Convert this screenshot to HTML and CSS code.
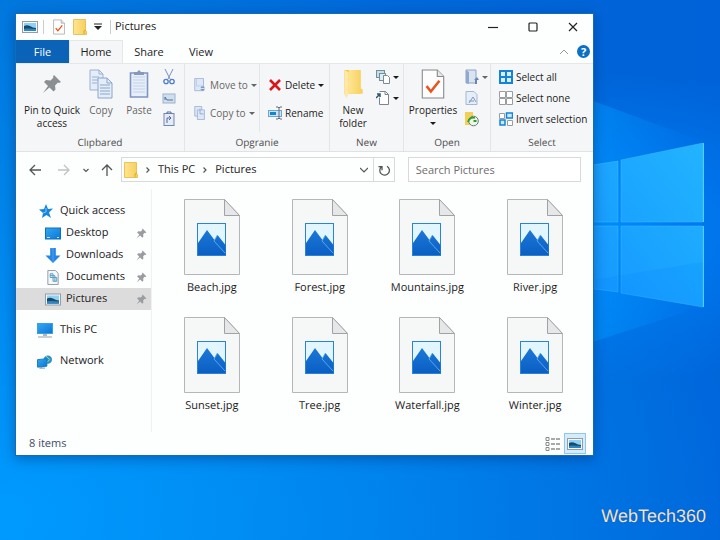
FILE: index.html
```
<!DOCTYPE html>
<html lang="en">
<head>
<meta charset="utf-8">
<title>Pictures</title>
<link rel="stylesheet" href="styles.css">
</head>
<body>
<svg class="defs" aria-hidden="true">
  <defs>
    <linearGradient id="gFolder" x1="0" x2="1"><stop offset="0" stop-color="#ffe591"/><stop offset="1" stop-color="#f6cf5b"/></linearGradient>
    <linearGradient id="gBlue" x1="0" y1="0" x2="1" y2="1"><stop offset="0" stop-color="#35a8f4"/><stop offset="1" stop-color="#0876d6"/></linearGradient>
    <linearGradient id="gPane" x1="0" y1="1" x2="1" y2="0"><stop offset="0" stop-color="#1495ff"/><stop offset="1" stop-color="#22b4ff"/></linearGradient>
    <linearGradient id="gBeam" x1="0" x2="1"><stop offset="0" stop-color="#0098ff" stop-opacity=".6"/><stop offset="1" stop-color="#0090ff" stop-opacity="0"/></linearGradient>
    <linearGradient id="gMount" x1="0" y1="0" x2="0" y2="1"><stop offset="0" stop-color="#1b78d8"/><stop offset="1" stop-color="#0b5fc2"/></linearGradient>
  </defs>
  <symbol id="picture" viewBox="0 0 16 14">
    <rect x=".5" y="1.5" width="15" height="11" fill="#f4f7fa" stroke="#929da8"/>
    <rect x="2" y="3" width="12" height="8" fill="#8fd0f5"/>
    <path d="M2 6c2-1 4-1 6 0s4 2 6 2v3H2z" fill="#17496e"/><path d="M2 9c4-1 8 0 12 0v2H2z" fill="#2f86c0"/>
  </symbol>
  <symbol id="checkdoc" viewBox="0 0 22 28">
    <path d="M1 1h14l6 6v20H1z" fill="#fdfdfd" stroke="#85888c"/><path d="M15 1v6h6" fill="#e6e6e6" stroke="#85888c"/>
    <path d="M5 16l4 5 8-10" fill="none" stroke="#e8541d" stroke-width="2.4"/>
  </symbol>
  <symbol id="folder" viewBox="0 0 18 28">
    <path d="M1 1h15v22H4l-1 4-2-4z" fill="#f3c64f"/><path d="M1 1l4 2v20l-2 4-2-4z" fill="#ffe9a4"/><path d="M5 1h11v17l2 1v4H5z" fill="url(#gFolder)"/>
  </symbol>
  <symbol id="smallfolder" viewBox="0 0 14 16">
    <path d="M.5.5h12v11l1 1v3H.5z" fill="url(#gFolder)" stroke="#e9c258"/><path d="M11 15v-3l2-1" fill="none" stroke="#dba92c"/>
  </symbol>
  <symbol id="pin" viewBox="0 0 20 20">
    <path d="M12 1l7 7-2 1-1-.5-3 3 .5 4-2 2-4-4L1 19l5-7-4-4 2-2 4.500.5 3-3L11 2.500z" fill="currentColor"/>
  </symbol>
  <symbol id="page" viewBox="0 0 14 16">
    <path d="M1 .5h10v14H1z" fill="#dce8f6" stroke="#9fb4d6"/><path d="M3 1v8h8" fill="none" stroke="#bccde6"/>
    <circle cx="10" cy="12" r="2.500" fill="#7f98c4"/><path d="M7 12h6" stroke="#dce8f6"/>
  </symbol>
  <symbol id="pagecopy" viewBox="0 0 14 16">
    <path d="M1 .5h8v11H1z" fill="#dce8f6" stroke="#9fb4d6"/><path d="M4 4.500h8v11H4z" fill="#dce8f6" stroke="#9fb4d6"/><path d="M7 3v6h4" fill="none" stroke="#8da6cc"/>
  </symbol>
  <symbol id="jpg" viewBox="0 0 56 76">
    <path d="M.5.5h40l15 16v59H.5z" fill="#f6f7f7" stroke="#b4b6b7"/><path d="M40.500.5v16h15z" fill="#e5e7e8" stroke="#a0a2a4"/>
    <rect x="13.500" y="24.500" width="28" height="32" fill="#e2f6ff" stroke="#2883dc"/>
    <path d="M14 44l9-13 7.500 10 3-5 8 10V56H14z" fill="url(#gMount)"/><path d="M33.500 36l-3.500 6 11 12" fill="none" stroke="#58a6ec"/>
  </symbol>
</svg>

<svg class="wallpaper" viewBox="0 0 720 540" preserveAspectRatio="none" aria-hidden="true">
  <path d="M580 96L704 142V306L580 346z" fill="url(#gBeam)"/>
  <g fill="url(#gPane)" stroke="#42bfff" stroke-opacity=".45">
    <path d="M580 167L618 161V222H580zM621 160L703 143V222H621zM580 226H618V292L580 287zM621 226H703V307L621 293z"/>
  </g>
  <path d="M703.500 143V222M703.500 226V307" stroke="#4fd0ff"/>
  <path d="M580 282L703 262V307L580 287z" fill="#0080ff" opacity=".15"/>
</svg>

<main class="window">
  <header class="titlebar">
    <svg class="i16"><use href="#picture"/></svg><i class="bar"></i>
    <svg class="qdoc"><use href="#checkdoc"/></svg>
    <svg class="qfolder"><use href="#smallfolder"/></svg>
    <svg class="qmore" viewBox="0 0 8 8"><path d="M0 1h8" stroke="#222"/><path d="M0 3h8L4 7z" fill="#222"/></svg><i class="bar last"></i>
    <h1>Pictures</h1>
    <div class="caption">
      <button aria-label="Minimize"><svg viewBox="0 0 10 10"><path d="M0 5.500h10"/></svg></button>
      <button aria-label="Maximize"><svg viewBox="0 0 10 10"><rect x="1" y="1" width="8" height="8" rx="1"/></svg></button>
      <button aria-label="Close"><svg viewBox="0 0 10 10"><path d="M1 1l8 8M9 1L1 9"/></svg></button>
    </div>
  </header>

  <nav class="tabs">
    <button class="file">File</button><button class="active">Home</button><button>Share</button><button>View</button>
    <span class="tabtools">
      <button aria-label="Collapse ribbon"><svg class="up" viewBox="0 0 8 6"><path d="M0 5l4-4 4 4" fill="none" stroke="#999"/></svg></button>
      <button class="help" aria-label="Help">?</button>
    </span>
  </nav>

  <section class="ribbon">
    <div class="group">
      <div class="tools clip">
        <button class="big pinbtn"><svg class="pinbig"><use href="#pin"/></svg><span>Pin to Quick access</span></button>
        <button class="big dim"><svg viewBox="0 0 24 30"><path d="M1 1h9l4 4v16H1z" fill="#e4edf8" stroke="#9bb1d4"/><path d="M10 1v4h4M3 8h7M3 11h7M3 14h5" fill="none" stroke="#9bb1d4"/><path d="M9 9h9l5 5v15H9z" fill="#e4edf8" stroke="#8ba5ce"/><path d="M18 9v5h5M11 16h10M11 19h10M11 22h10M11 25h10" fill="none" stroke="#8ba5ce"/></svg><span>Copy</span></button>
        <button class="big dim"><svg viewBox="0 0 20 30"><path d="M1.500 4h17v24h-17z" fill="#e6eef9" stroke="#7f94c0" stroke-width="1.600"/><path d="M4 8h12M4 11h12M4 14h12M4 17h12M4 20h12M4 23h12" stroke="#c3d1e7"/><path d="M5 6V3h3l2-2 2 2h3v3z" fill="#8798b8"/></svg><span>Paste</span></button>
        <div class="minis">
          <button aria-label="Cut"><svg viewBox="0 0 12 16"><path d="M2 0l5 10M10 0L5 10" stroke="#7e93b8" fill="none"/><circle cx="3" cy="12.500" r="2.200" fill="none" stroke="#4f7fc9" stroke-width="1.300"/><circle cx="9" cy="12.500" r="2.200" fill="none" stroke="#4f7fc9" stroke-width="1.300"/></svg></button>
          <button aria-label="Copy path"><svg viewBox="0 0 12 16"><rect x="0" y="4" width="12" height="9" fill="#d0dfef" stroke="#9db2cf"/><path d="M2 10V7l2 3h6" fill="none" stroke="#5a7195"/></svg></button>
          <button aria-label="Paste shortcut"><svg viewBox="0 0 12 16"><rect x="1" y="2.500" width="10" height="12" fill="#e4ecf7" stroke="#7487b1"/><path d="M4 2.500V1h4v1.500M4 12V7h4l-2-2m2 2L6 9" fill="none" stroke="#516a9e"/></svg></button>
        </div>
      </div>
      <h2>Clıpbared</h2>
    </div>
    <div class="group">
      <div class="tools organize">
        <div class="list dim">
          <button><svg><use href="#page"/></svg>Move to<i class="caret"></i></button>
          <button><svg><use href="#pagecopy"/></svg>Copy to<i class="caret"></i></button>
        </div>
        <div class="list second">
          <button><svg viewBox="0 0 14 14"><path d="M2 2l10 10M12 2L2 12" stroke="#d9161b" stroke-width="2.600"/></svg>Delete<i class="caret"></i></button>
          <button><svg viewBox="0 0 14 14"><rect x=".5" y="4.500" width="13" height="6" fill="#c9e6f8" stroke="#6ea5cf"/><rect x="2" y="6" width="6" height="3" fill="#1684cc"/><path d="M8 1h2l1 1 1-1h2M8 13h2l1-1 1 1h2M11 2v10" fill="none" stroke="#5f6b7c"/></svg>Rename</button>
        </div>
      </div>
      <h2>Opgranie</h2>
    </div>
    <div class="group">
      <div class="tools new">
        <button class="big folderbtn"><svg><use href="#folder"/></svg><span>New folder</span></button>
        <div class="minis">
          <button aria-label="New item"><svg viewBox="0 0 14 16"><rect x=".5" y="1.500" width="8" height="7" fill="#bde1ee" stroke="#7c8b96"/><rect x="3.500" y="4.500" width="6" height="7" fill="#dceef5" stroke="#7c8b96"/><path d="M7.500 6.500h4l2 2v6h-6z" fill="#fff" stroke="#7c8b96"/></svg><i class="caret"></i></button>
          <button aria-label="Easy access"><svg viewBox="0 0 14 16"><path d="M3.500 1.500h6l3 3v10h-9v-7" fill="#fff" stroke="#7c858e"/><path d="M9 1.500v3h3.500" fill="none" stroke="#7c858e"/><path d="M0 8l4-4M1 4h3v3" fill="none" stroke="#2b5972" stroke-width="1.500"/></svg><i class="caret"></i></button>
        </div>
      </div>
      <h2>New</h2>
    </div>
    <div class="group">
      <div class="tools open">
        <button class="big"><svg><use href="#checkdoc"/></svg><span>Properties</span><i class="caret"></i></button>
        <div class="minis">
          <button aria-label="Open" class="dim"><svg viewBox="0 0 14 16"><path d="M1 1h10v13H1z" fill="#dae4f1" stroke="#8da3c4"/><path d="M1 1l3 2v12l-3-1z" fill="#91a9ce"/><path d="M9 11l3-3 2 3h-2v4h-2v-4z" fill="#6985b3"/></svg><i class="caret"></i></button>
          <button aria-label="Edit"><svg viewBox="0 0 14 16"><path d="M1 1.500h8l3 3v10H1z" fill="#e5edf8" stroke="#a4b7d6"/><path d="M4 13l4-6 3 5M4 11h5" fill="none" stroke="#7f99c5"/></svg></button>
          <button aria-label="History"><svg viewBox="0 0 14 16"><path d="M0 1h8v13H0z" fill="#f4cf57"/><circle cx="8.500" cy="10" r="4.800" fill="#eef5e9" stroke="#6c7b6f"/><path d="M3 11c1-4 4-5 7-4M8.500 10h3" fill="none" stroke="#2d9e2f" stroke-width="1.800"/></svg></button>
        </div>
      </div>
      <h2>Open</h2>
    </div>
    <div class="group">
      <div class="tools list select">
        <button><svg viewBox="0 0 14 14"><rect width="14" height="14" fill="#1683d8"/><path d="M2 2h4v4H2zM8 2h4v4H8zM2 8h4v4H2zM8 8h4v4H8z" fill="#d3f1ff"/></svg>Select all</button>
        <button><svg viewBox="0 0 14 14"><path d="M.5.5h6v6h-6zM7.500.5h6v6h-6zM.5 7.500h6v6h-6zM7.500 7.500h6v6h-6z" fill="#fff" stroke="#999da1"/></svg>Select none</button>
        <button><svg viewBox="0 0 14 14"><path d="M.5 1.500h5v5h-5zM8.500 8.500h5v5h-5z" fill="#fff" stroke="#999da1"/><path d="M7.500 1h6v5h-6zM1 8h5v5H1z" fill="#c7ecff" stroke="#1683d8" stroke-width="1.500"/></svg>Invert selection</button>
      </div>
      <h2>Select</h2>
    </div>
  </section>

  <section class="address">
    <button aria-label="Back"><svg class="arrow" viewBox="0 0 12 12"><path d="M12 6H1M6 1L1 6l5 5"/></svg></button>
    <button aria-label="Forward" disabled><svg class="arrow" viewBox="0 0 12 12"><path d="M0 6h11M6 1l5 5-5 5"/></svg></button>
    <button aria-label="Recent"><svg class="chev" viewBox="0 0 8 8"><path d="M1.500 3L4 5.500 6.500 3"/></svg></button>
    <button aria-label="Up"><svg class="arrow" viewBox="0 0 12 12"><path d="M6 12V1M1 6l5-5 5 5"/></svg></button>
    <div class="path">
      <svg class="qfolder"><use href="#smallfolder"/></svg>
      <svg class="chev" viewBox="0 0 8 8"><path d="M2.500 1.500L5 4 2.500 6.500"/></svg><a href="#pc">This PC</a>
      <svg class="chev" viewBox="0 0 8 8"><path d="M2.500 1.500L5 4 2.500 6.500"/></svg><a href="#pictures">Pictures</a>
      <button class="drop" aria-label="Previous locations"><svg class="chev" viewBox="0 0 8 8"><path d="M0 2l4 4 4-4"/></svg></button>
      <button class="refresh" aria-label="Refresh"><svg class="arrow" viewBox="0 0 12 12"><path d="M8.500 2A4.800 4.800 0 1 1 3 2.500M0 2.500h3.500V6" transform="translate(.5 .2)"/></svg></button>
    </div>
    <input type="search" aria-label="Search Pictures" placeholder="Search Pictures">
  </section>

  <div class="content">
    <nav class="side">
      <a class="top" href="#quick"><svg viewBox="0 0 14 14"><path d="M7 0l2 5 5-.5-4 4 2 5.500-4.500-3L3 14l1-5-4-3.500 5-.5z" fill="#1686dc"/><path d="M7 4v4L4 9" stroke="#7bc7fb" fill="none"/></svg>Quick access</a>
      <a href="#desktop"><svg viewBox="0 0 16 14"><rect x=".5" y="1.500" width="15" height="11" fill="url(#gBlue)" stroke="#0d70bf"/><path d="M2 11h3m7 0h2" stroke="#bfe4ff"/></svg>Desktop<svg class="pin"><use href="#pin"/></svg></a>
      <a href="#downloads"><svg viewBox="0 0 16 16"><path d="M5 0h6v8h5l-8 8-8-8h5z" fill="#2485e4"/><path d="M5 0h3v15" fill="none" stroke="#54a5ee"/></svg>Downloads<svg class="pin"><use href="#pin"/></svg></a>
      <a href="#documents"><svg viewBox="0 0 16 16"><path d="M2.500.5h8l3 3v12h-11z" fill="#f5f8fa" stroke="#8f989f"/><path d="M5 4h3v4H5zM8 8h4v4H8zM5 6h5v6" fill="#dff1fb" stroke="#549ac3"/></svg>Documents<svg class="pin"><use href="#pin"/></svg></a>
      <a class="current" href="#pictures"><svg><use href="#picture"/></svg>Pictures<svg class="pin"><use href="#pin"/></svg></a>
      <a class="top gap" href="#pc"><svg viewBox="0 0 16 15"><rect x=".5" y=".5" width="15" height="10" fill="url(#gBlue)" stroke="#3b9fde"/><path d="M6 11h4v2H6z" fill="#a9bac5"/><path d="M1 14h14" stroke="#91a3ad"/></svg>This PC</a>
      <a class="top gap" href="#network"><svg viewBox="0 0 16 16"><circle cx="11" cy="6" r="4.500" fill="#2e91c9"/><path d="M9 2l4 4-3 3" fill="none" stroke="#a9dfa5"/><path d="M0 6l10-1v8l-10 1z" fill="url(#gBlue)" stroke="#157bbd"/><path d="M4 14v1m-2 0h6" stroke="#718fa1"/></svg>Network</a>
    </nav>
    <section class="files">
      <figure><svg><use href="#jpg"/></svg><figcaption>Beach.jpg</figcaption></figure>
      <figure><svg><use href="#jpg"/></svg><figcaption>Forest.jpg</figcaption></figure>
      <figure><svg><use href="#jpg"/></svg><figcaption>Mountains.jpg</figcaption></figure>
      <figure><svg><use href="#jpg"/></svg><figcaption>River.jpg</figcaption></figure>
      <figure><svg><use href="#jpg"/></svg><figcaption>Sunset.jpg</figcaption></figure>
      <figure><svg><use href="#jpg"/></svg><figcaption>Tree.jpg</figcaption></figure>
      <figure><svg><use href="#jpg"/></svg><figcaption>Waterfall.jpg</figcaption></figure>
      <figure><svg><use href="#jpg"/></svg><figcaption>Winter.jpg</figcaption></figure>
    </section>
  </div>

  <footer class="status">
    <span>8 items</span>
    <button aria-label="Details view"><svg viewBox="0 0 16 14"><path d="M1 .5h3v3H1zM1 5.500h3v3H1zM1 10.500h3v3H1z" fill="none" stroke="#888"/><path d="M6 2h4m1 0h4M6 7h4m1 0h4M6 12h4m1 0h4" stroke="#555"/></svg></button>
    <button class="on" aria-label="Large icons view"><svg class="i16"><use href="#picture"/></svg></button>
  </footer>
</main>
<div class="brand">WebTech360</div>
</body>
</html>
```
FILE: styles.css
```
* { box-sizing: border-box; }
html { min-height: 100%; }
body {
  margin: 0;
  min-height: 100vh;
  padding: 13px 126px 12px 15px;
  display: flex;
  flex-direction: column;
  font: 11px/16px "Open Sans", "Noto Sans", sans-serif;
  text-rendering: geometricPrecision;
  color: #1c1c1c;
  background:
    radial-gradient(ellipse at 85% 42%, rgba(0, 135, 255, .8), rgba(0, 120, 240, 0) 35%),
    radial-gradient(ellipse at 0% 96%, #009aff, rgba(0, 140, 255, 0) 80%),
    linear-gradient(90deg, #0073d9, #0068d8 60%, #0062d8);
}
.defs { position: absolute; width: 0; height: 0; }
.wallpaper { position: absolute; inset: 0; width: 100%; height: 100%; }
button { font: inherit; color: inherit; background: none; border: 0; padding: 0; display: flex; align-items: center; }
a { color: inherit; text-decoration: none; }
svg { flex: none; display: block; }
h1, h2, figure { margin: 0; font: inherit; }

.window {
  position: relative;
  background: #fdfefe;
  border: 1px solid #176bb4;
  box-shadow: 0 3px 12px rgba(0, 45, 110, .45);
}
.i16 { width: 16px; height: 14px; }
.titlebar { display: flex; align-items: center; height: 26px; padding-left: 6px; }
.bar { width: 1px; height: 14px; background: #ccc; margin: 0 9px 0 5px; }
.bar.last { margin: 0 4px 0 8px; }
.qdoc { width: 12px; height: 16px; margin-right: 8px; }
.qfolder { width: 14px; height: 16px; }
.qmore { width: 8px; height: 8px; margin-left: 7px; }
.caption { display: flex; margin-left: auto; }
.caption button { width: 40px; height: 26px; justify-content: center; }
.caption svg { width: 10px; height: 10px; fill: none; stroke: #222; stroke-width: 1.2; }

.tabs { display: flex; height: 23px; }
.tabs > button { width: 52px; justify-content: center; }
.tabs .file { background: #0b63b8; color: #fff; width: 53px; }
.tabs .active { background: #f5f6f7; border: 1px solid #e6e7e8; border-bottom: 0; width: 54px; }
.tabtools { display: flex; align-items: center; gap: 9px; margin-left: auto; padding-right: 3px; }
.up { width: 8px; height: 6px; }
.tabtools .help { width: 13px; height: 13px; border-radius: 50%; background: #0b6fc4; color: #fff; justify-content: center; font-weight: bold; }

.ribbon {
  display: grid;
  grid-template-columns: 169fr 145fr 74fr 87fr 102fr;
  min-height: 89px;
  font-size: 10px;
  background: #f5f6f7;
  border-top: 1px solid #e6e7e8;
  border-bottom: 1px solid #dfe1e2;
}
.group { display: flex; flex-direction: column; border-right: 1px solid #e3e5e7; padding-bottom: 2px; min-width: 0; }
.group:last-child { border-right: 0; }
.group h2 { text-align: center; color: #4d4d4d; line-height: 14px; }
.tools { flex: 1; display: flex; align-items: flex-start; }
.big { flex-direction: column; line-height: 13px; gap: 5px; padding-top: 5px; text-align: center; }
.big svg { width: 24px; height: 30px; }
.dim { color: #666; }
.clip { padding-left: 6px; }
.clip .big + .big { width: 38px; }
.clip .pinbtn { width: 60px; }
.big .pinbig { width: 20px; color: #8b8f92; }
.minis { display: flex; flex-direction: column; gap: 5px; padding-top: 5px; }
.minis svg { width: 14px; height: 16px; }
.clip .minis { margin-left: 4px; }
.caret { border: 3px solid transparent; border-top-color: currentColor; border-bottom: 0; margin-left: 3px; }
.list button { gap: 3px; white-space: nowrap; }
.list .caret { margin-left: 0; }
.list svg { width: 14px; height: 14px; }
.organize .list { display: flex; flex-direction: column; gap: 12px; padding: 13px 0 0 8px; height: 68px; width: 74px; }
.organize .second { border-left: 1px solid #e3e5e7; padding-left: 8px; width: 70px; }
.new .big { width: 46px; padding: 5px 4px 0; }
.open .big { width: 58px; }
.open .big .caret { margin: 0; }
.open .minis { margin-left: 3px; }
.select { flex-direction: column; gap: 5px; padding: 5px 0 0 8px; }

.address { display: flex; align-items: center; height: 37px; padding: 0 12px 2px 13px; }
.address > button { margin-right: 8px; }
.arrow { width: 12px; height: 12px; fill: none; stroke: #555; stroke-width: 1.3; }
.address > button:first-child { margin-right: 17px; }
.address > button:disabled { margin-right: 12px; }
.address > button:nth-child(3) { margin-right: 11px; }
button:disabled .arrow { stroke: #c2c2c2; }
.chev { width: 8px; height: 8px; fill: none; stroke: #555; stroke-width: 1.2; }
.path { display: flex; align-items: center; flex: 1; height: 25px; border: 1px solid #d9d9d9; padding-left: 2px; }
.path .chev { margin: 0 6px; }
.path .drop { margin-left: auto; }
.path .refresh { align-self: stretch; border-left: 1px solid #d9d9d9; padding: 0 4px; }
.path .drop .chev { margin: 0 5px; }
.address input { flex: none; width: 31.4%; height: 25px; margin: 0 0 0 13px; padding: 0 7px; border: 1px solid #d9d9d9; font: inherit; background: #fff; border-radius: 0; appearance: none; }
.address input::placeholder { color: #6d6d6d; }

.content { display: flex; min-height: 243px; }
.side { width: 136px; border-right: 1px solid #f0f1f2; padding-top: 11px; }
.side a { display: flex; align-items: center; gap: 5px; height: 22px; padding: 0 4px 0 29px; }
.side a.top { padding-left: 23px; gap: 7px; }
.side a.top.gap { margin-top: 9px; padding-left: 21px; }
.side svg { width: 16px; height: 15px; }
.side a.top:first-child svg { width: 14px; height: 14px; }
.side .pin { width: 11px; height: 11px; margin-left: auto; color: #9a9da0; }
.side .current { background: #dcdcdc; }
.files { flex: 1; display: grid; grid-template-columns: repeat(4, 1fr); align-content: start; row-gap: 21px; padding: 10px 4px 0 6px; }
.files figure { display: flex; flex-direction: column; align-items: center; gap: 5px; }
.files svg { width: 56px; height: 76px; }

.status { display: flex; align-items: center; height: 23px; padding: 0 7px 0 13px; color: #3f4b66; }
.status span { margin-right: auto; }
.status button { height: 21px; width: 22px; justify-content: center; }
.status button svg { width: 16px; height: 14px; }
.status .on { background: #d5ecfb; border: 1px solid #8ec8ef; }

.brand {
  position: relative;
  margin: auto -112px 0 auto;
  font: 18px/24px "Liberation Sans", Arial, sans-serif;
  color: #e4e7ec;
  text-shadow: 0 0 1px #333;
}
```
